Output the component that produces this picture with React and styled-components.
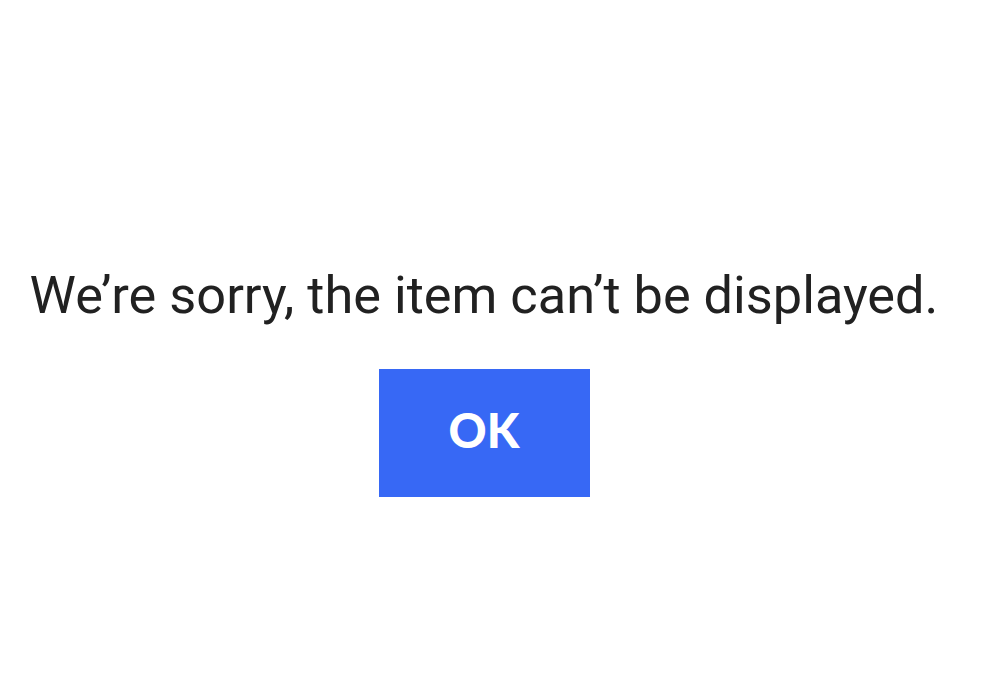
import React from 'react';
import styled, { createGlobalStyle } from 'styled-components';

const GlobalStyle = createGlobalStyle`
  html, body {
    margin: 0;
    padding: 0;
    background: #ffffff;
  }
`;

const Page = styled.div`
  width: 968px;
  height: 699px;
  display: flex;
  flex-direction: column;
  align-items: center;
  padding-top: 265px;
  box-sizing: border-box;
`;

const Message = styled.p`
  margin: 0;
  font-family: 'Roboto', sans-serif;
  font-weight: 400;
  font-size: 52.3px;
  line-height: 60px;
  color: #212121;
  white-space: nowrap;
`;

const OkButton = styled.button`
  margin-top: 44px;
  width: 211px;
  height: 128px;
  padding: 0 0 6px;
  border: none;
  border-radius: 0;
  background: #3768f5;
  color: #ffffff;
  font-family: 'Lato', sans-serif;
  font-weight: 900;
  font-size: 47px;
  line-height: 1;
  cursor: pointer;
`;

const App = () => {
  return (
    <>
      <GlobalStyle />
      <Page>
        <Message>We’re sorry, the item can’t be displayed.</Message>
        <OkButton type="button">OK</OkButton>
      </Page>
    </>
  );
};

export default App;
